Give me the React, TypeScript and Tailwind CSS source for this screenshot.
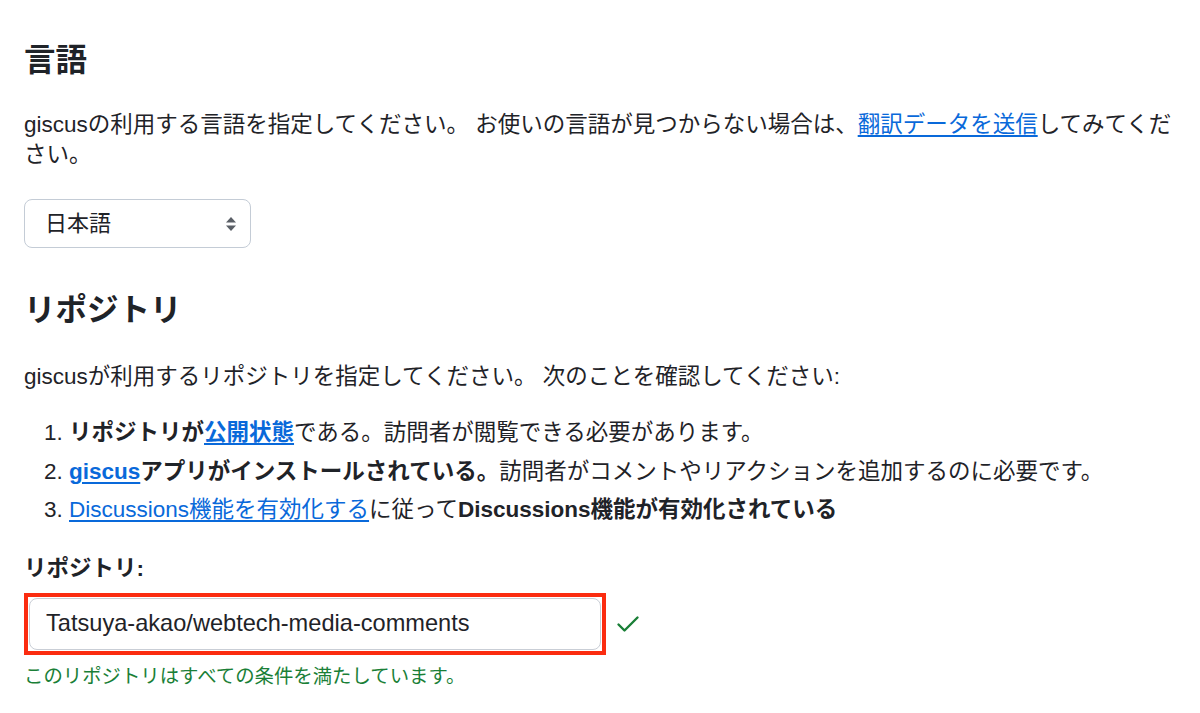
import React from "react";

const font = {
  fontFamily: '"Liberation Sans", "Noto Sans CJK JP", sans-serif',
};

export default function App() {
  return (
    <div
      className="min-h-[713px] bg-white px-[24px] pt-[40px] text-[#1f2328]"
      style={font}
    >
      <h2 className="text-[31.5px] font-bold leading-[40px]">言語</h2>
      <p className="mt-[30px] text-[22.5px] leading-[30px]">
        giscusの利用する言語を指定してください。 お使いの言語が見つからない場合は、
        <a className="text-[#0969da] underline underline-offset-[3px]" href="#">
          翻訳データを送信
        </a>
        してみてください。
      </p>
      <div className="mt-[29px] flex h-[49px] w-[227px] items-center justify-between rounded-[8px] border border-[#c4ccd6] bg-white pl-[20px] pr-[13px]">
        <span className="text-[22px] leading-[30px]">日本語</span>
        <svg width="12" height="18" viewBox="0 0 12 18" aria-hidden="true">
          <path d="M6 2 L11 7.5 H1 Z" fill="#5a5f66" />
          <path d="M6 16 L11 10.5 H1 Z" fill="#5a5f66" />
        </svg>
      </div>

      <h2 className="mt-[42px] text-[31.5px] font-bold leading-[40px]">リポジトリ</h2>
      <p className="mt-[32px] text-[22.5px] leading-[30px]">
        giscusが利用するリポジトリを指定してください。 次のことを確認してください:
      </p>
      <ol className="mt-[22px] list-decimal pl-[45px] text-[22.5px] leading-[38.5px]">
        <li>
          <strong>
            リポジトリが
            <a className="text-[#0969da] underline underline-offset-[3px]" href="#">
              公開状態
            </a>
          </strong>
          である。訪問者が閲覧できる必要があります。
        </li>
        <li>
          <strong>
            <a className="text-[#0969da] underline underline-offset-[3px]" href="#">
              giscus
            </a>
            アプリがインストールされている。
          </strong>
          訪問者がコメントやリアクションを追加するのに必要です。
        </li>
        <li>
          <a className="text-[#0969da] underline underline-offset-[3px]" href="#">
            Discussions機能を有効化する
          </a>
          に従って<strong>Discussions機能が有効化されている</strong>
        </li>
      </ol>

      <label className="mt-[24px] block text-[22.5px] font-bold leading-[30px]">
        リポジトリ:
      </label>
      <div className="mt-[9px] flex items-center gap-[10px]">
        <div className="w-[582px] border-[4px] border-[#fb2c10] p-[1px]">
          <input
            readOnly
            value="Tatsuya-akao/webtech-media-comments"
            className="block h-[52px] w-full rounded-[8px] border border-[#c9ced6] bg-white pl-[16px] text-[23.6px] text-[#1f2328] outline-none"
            style={font}
          />
        </div>
        <svg width="24" height="20" viewBox="0 0 24 20" aria-hidden="true">
          <path
            d="M2.5 10.5 L8.5 16.5 L21.5 3.5"
            fill="none"
            stroke="#1a7f37"
            strokeWidth="2.4"
            strokeLinecap="round"
            strokeLinejoin="round"
          />
        </svg>
      </div>
      <p className="mt-[8px] text-[19.4px] leading-[26px] text-[#1a7f37]">
        このリポジトリはすべての条件を満たしています。
      </p>
    </div>
  );
}
